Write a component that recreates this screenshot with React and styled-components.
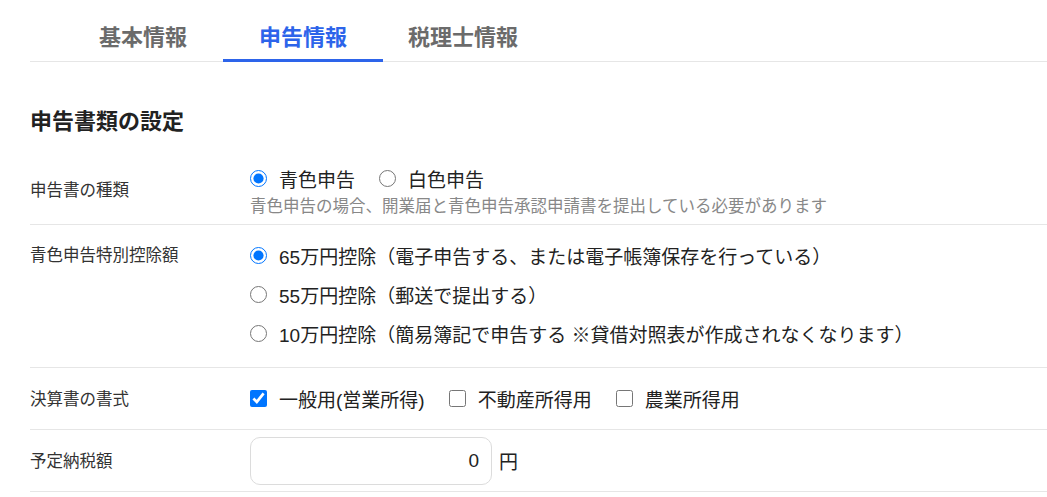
import React from 'react';
import styled, { createGlobalStyle } from 'styled-components';

const GlobalStyle = createGlobalStyle`
    body {
        margin: 0;
        background: #fff;
        font-family: "Liberation Sans", "Noto Sans CJK JP", sans-serif;
        color: #222;
    }
`;

const Page = styled.div`
    padding-left: 30px;
`;

const TabBar = styled.div`
    display: flex;
    padding-left: 33px;
    border-bottom: 1px solid #e6e6e6;
    height: 61px;
`;

const Tab = styled.div`
    box-sizing: border-box;
    width: 160px;
    height: 62px;
    padding-top: 24px;
    text-align: center;
    font-size: 22px;
    line-height: 27px;
    font-weight: bold;
    color: ${p => (p.$active ? '#2d64ea' : '#6b6b6b')};
    border-bottom: 3px solid ${p => (p.$active ? '#2d64ea' : 'transparent')};
    cursor: pointer;
`;

const Heading = styled.h2`
    margin: 46px 0 21px;
    font-size: 22px;
    line-height: 28px;
    font-weight: bold;
    color: #222;
`;

const Row = styled.div`
    display: grid;
    grid-template-columns: 220px 1fr;
    align-items: ${p => (p.$top ? 'start' : 'center')};
    min-height: 49px;
    padding: ${p => p.$pad || '6px 0'};
    border-bottom: 1px solid #e6e6e6;
`;

const Label = styled.div`
    font-size: 16.5px;
    color: #333;
    line-height: ${p => (p.$top ? '39px' : '24px')};
    padding-top: ${p => (p.$top ? '5px' : '0')};
`;

const Field = styled.div`
    display: flex;
    flex-direction: column;
`;

const Inline = styled.div`
    display: flex;
    align-items: center;
    height: ${p => p.$h || 32}px;
`;

const OptionList = styled.div`
    display: flex;
    flex-direction: column;
    padding: 5px 0 8px;
`;

const Option = styled.label`
    display: inline-flex;
    align-items: center;
    gap: 12px;
    height: ${p => (p.$tall ? '39px' : 'auto')};
    margin-right: 24px;
    font-size: 19px;
    color: #222;
    cursor: pointer;

    input {
        width: 17px;
        height: 17px;
        margin: 0;
        flex: none;
    }
`;

const Hint = styled.div`
    font-size: 16.5px;
    line-height: 24px;
    color: #888;
`;

const AmountBox = styled.input`
    box-sizing: border-box;
    width: 242px;
    height: 48px;
    padding: 0 12px;
    border: 1px solid #dcdcdc;
    border-radius: 10px;
    font-family: inherit;
    font-size: 19px;
    color: #222;
    text-align: right;
    outline: none;
`;

const Unit = styled.span`
    margin-left: 7px;
    font-size: 19px;
    color: #222;
`;

const deductions = [
    { value: '65', text: '65万円控除（電子申告する、または電子帳簿保存を行っている）' },
    { value: '55', text: '55万円控除（郵送で提出する）' },
    { value: '10', text: '10万円控除（簡易簿記で申告する ※貸借対照表が作成されなくなります）' },
];

const formats = [
    { key: 'general', text: '一般用(営業所得)' },
    { key: 'realestate', text: '不動産所得用' },
    { key: 'farm', text: '農業所得用' },
];

export default function App() {
    const [kind, setKind] = React.useState('blue');
    const [deduction, setDeduction] = React.useState('65');
    const [checked, setChecked] = React.useState({ general: true });
    const [amount, setAmount] = React.useState('0');

    return (
        <Page>
            <GlobalStyle />
            <TabBar>
                <Tab>基本情報</Tab>
                <Tab $active>申告情報</Tab>
                <Tab>税理士情報</Tab>
            </TabBar>

            <Heading>申告書類の設定</Heading>

            <Row $pad="5px 0 6px">
                <Label>申告書の種類</Label>
                <Field>
                    <Inline>
                        <Option>
                            <input type="radio" name="kind" checked={kind === 'blue'}
                                onChange={() => setKind('blue')} />
                            青色申告
                        </Option>
                        <Option>
                            <input type="radio" name="kind" checked={kind === 'white'}
                                onChange={() => setKind('white')} />
                            白色申告
                        </Option>
                    </Inline>
                    <Hint>青色申告の場合、開業届と青色申告承認申請書を提出している必要があります</Hint>
                </Field>
            </Row>

            <Row $top $pad="6px 0">
                <Label $top>青色申告特別控除額</Label>
                <OptionList>
                    {deductions.map(d => (
                        <Option key={d.value} $tall>
                            <input type="radio" name="deduction" checked={deduction === d.value}
                                onChange={() => setDeduction(d.value)} />
                            {d.text}
                        </Option>
                    ))}
                </OptionList>
            </Row>

            <Row>
                <Label>決算書の書式</Label>
                <Inline $h={49}>
                    {formats.map(f => (
                        <Option key={f.key}>
                            <input type="checkbox" checked={!!checked[f.key]}
                                onChange={() => setChecked({ ...checked, [f.key]: !checked[f.key] })} />
                            {f.text}
                        </Option>
                    ))}
                </Inline>
            </Row>

            <Row>
                <Label>予定納税額</Label>
                <Inline $h={48}>
                    <AmountBox value={amount} onChange={e => setAmount(e.target.value)} />
                    <Unit>円</Unit>
                </Inline>
            </Row>
        </Page>
    );
}
